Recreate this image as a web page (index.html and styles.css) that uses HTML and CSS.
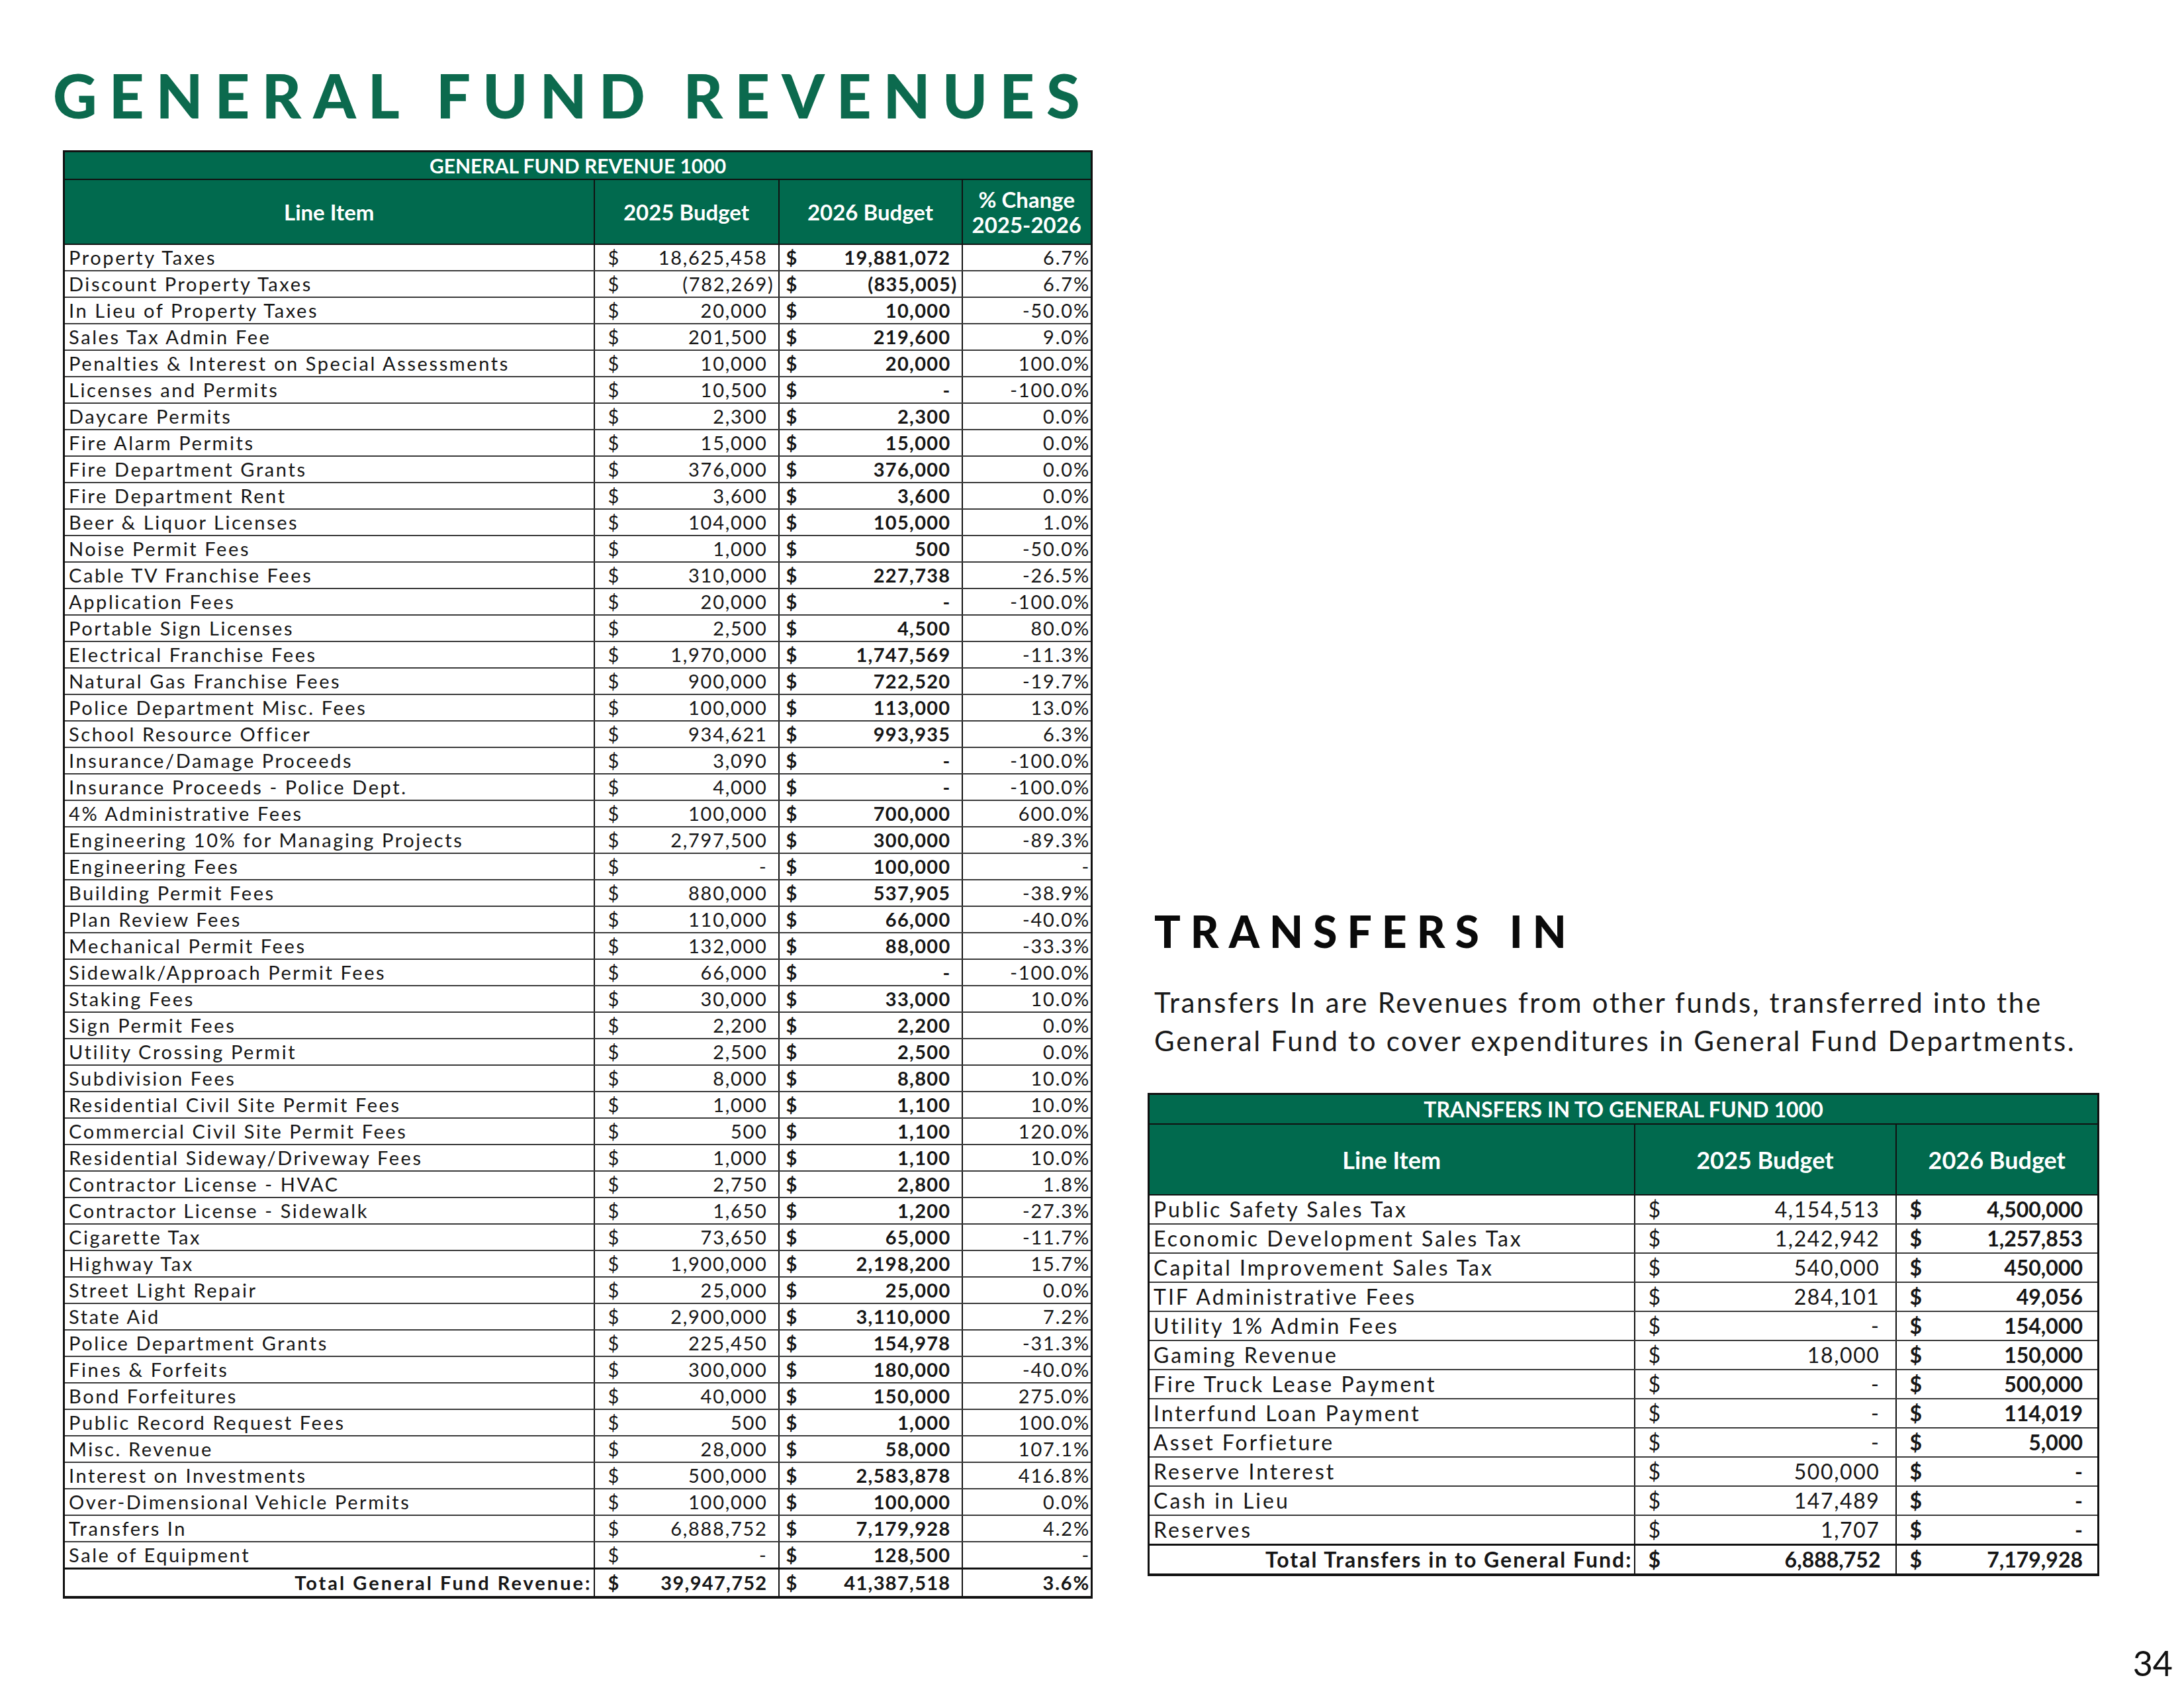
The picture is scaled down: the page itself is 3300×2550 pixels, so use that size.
FILE: index.html
```html
<!DOCTYPE html>
<html>
<head>
<meta charset="utf-8">
<link rel="stylesheet" href="styles.css">
</head>
<body>
<div class="page">
  <div class="content">
    <section class="left">
      <h1 class="title">GENERAL FUND REVENUES</h1>
      <table class="rev">
        <colgroup><col class="c1"><col class="c2"><col class="c3"><col class="c4"></colgroup>
        <thead>
          <tr class="cap"><th colspan="4">GENERAL FUND REVENUE 1000</th></tr>
          <tr class="head"><th>Line Item</th><th>2025 Budget</th><th>2026 Budget</th><th>% Change<br>2025-2026</th></tr>
        </thead>
        <tbody>
          <tr><td class="name">Property Taxes</td><td class="amt"><span class="cur">$</span>18,625,458</td><td class="amt b"><span class="cur">$</span>19,881,072</td><td class="pct">6.7%</td></tr>
          <tr><td class="name">Discount Property Taxes</td><td class="amt"><span class="cur">$</span><span class="neg">(782,269)</span></td><td class="amt b"><span class="cur">$</span><span class="neg">(835,005)</span></td><td class="pct">6.7%</td></tr>
          <tr><td class="name">In Lieu of Property Taxes</td><td class="amt"><span class="cur">$</span>20,000</td><td class="amt b"><span class="cur">$</span>10,000</td><td class="pct">-50.0%</td></tr>
          <tr><td class="name">Sales Tax Admin Fee</td><td class="amt"><span class="cur">$</span>201,500</td><td class="amt b"><span class="cur">$</span>219,600</td><td class="pct">9.0%</td></tr>
          <tr><td class="name">Penalties &amp; Interest on Special Assessments</td><td class="amt"><span class="cur">$</span>10,000</td><td class="amt b"><span class="cur">$</span>20,000</td><td class="pct">100.0%</td></tr>
          <tr><td class="name">Licenses and Permits</td><td class="amt"><span class="cur">$</span>10,500</td><td class="amt b"><span class="cur">$</span>-</td><td class="pct">-100.0%</td></tr>
          <tr><td class="name">Daycare Permits</td><td class="amt"><span class="cur">$</span>2,300</td><td class="amt b"><span class="cur">$</span>2,300</td><td class="pct">0.0%</td></tr>
          <tr><td class="name">Fire Alarm Permits</td><td class="amt"><span class="cur">$</span>15,000</td><td class="amt b"><span class="cur">$</span>15,000</td><td class="pct">0.0%</td></tr>
          <tr><td class="name">Fire Department Grants</td><td class="amt"><span class="cur">$</span>376,000</td><td class="amt b"><span class="cur">$</span>376,000</td><td class="pct">0.0%</td></tr>
          <tr><td class="name">Fire Department Rent</td><td class="amt"><span class="cur">$</span>3,600</td><td class="amt b"><span class="cur">$</span>3,600</td><td class="pct">0.0%</td></tr>
          <tr><td class="name">Beer &amp; Liquor Licenses</td><td class="amt"><span class="cur">$</span>104,000</td><td class="amt b"><span class="cur">$</span>105,000</td><td class="pct">1.0%</td></tr>
          <tr><td class="name">Noise Permit Fees</td><td class="amt"><span class="cur">$</span>1,000</td><td class="amt b"><span class="cur">$</span>500</td><td class="pct">-50.0%</td></tr>
          <tr><td class="name">Cable TV Franchise Fees</td><td class="amt"><span class="cur">$</span>310,000</td><td class="amt b"><span class="cur">$</span>227,738</td><td class="pct">-26.5%</td></tr>
          <tr><td class="name">Application Fees</td><td class="amt"><span class="cur">$</span>20,000</td><td class="amt b"><span class="cur">$</span>-</td><td class="pct">-100.0%</td></tr>
          <tr><td class="name">Portable Sign Licenses</td><td class="amt"><span class="cur">$</span>2,500</td><td class="amt b"><span class="cur">$</span>4,500</td><td class="pct">80.0%</td></tr>
          <tr><td class="name">Electrical Franchise Fees</td><td class="amt"><span class="cur">$</span>1,970,000</td><td class="amt b"><span class="cur">$</span>1,747,569</td><td class="pct">-11.3%</td></tr>
          <tr><td class="name">Natural Gas Franchise Fees</td><td class="amt"><span class="cur">$</span>900,000</td><td class="amt b"><span class="cur">$</span>722,520</td><td class="pct">-19.7%</td></tr>
          <tr><td class="name">Police Department Misc. Fees</td><td class="amt"><span class="cur">$</span>100,000</td><td class="amt b"><span class="cur">$</span>113,000</td><td class="pct">13.0%</td></tr>
          <tr><td class="name">School Resource Officer</td><td class="amt"><span class="cur">$</span>934,621</td><td class="amt b"><span class="cur">$</span>993,935</td><td class="pct">6.3%</td></tr>
          <tr><td class="name">Insurance/Damage Proceeds</td><td class="amt"><span class="cur">$</span>3,090</td><td class="amt b"><span class="cur">$</span>-</td><td class="pct">-100.0%</td></tr>
          <tr><td class="name">Insurance Proceeds - Police Dept.</td><td class="amt"><span class="cur">$</span>4,000</td><td class="amt b"><span class="cur">$</span>-</td><td class="pct">-100.0%</td></tr>
          <tr><td class="name">4% Administrative Fees</td><td class="amt"><span class="cur">$</span>100,000</td><td class="amt b"><span class="cur">$</span>700,000</td><td class="pct">600.0%</td></tr>
          <tr><td class="name">Engineering 10% for Managing Projects</td><td class="amt"><span class="cur">$</span>2,797,500</td><td class="amt b"><span class="cur">$</span>300,000</td><td class="pct">-89.3%</td></tr>
          <tr><td class="name">Engineering Fees</td><td class="amt"><span class="cur">$</span>-</td><td class="amt b"><span class="cur">$</span>100,000</td><td class="pct">-</td></tr>
          <tr><td class="name">Building Permit Fees</td><td class="amt"><span class="cur">$</span>880,000</td><td class="amt b"><span class="cur">$</span>537,905</td><td class="pct">-38.9%</td></tr>
          <tr><td class="name">Plan Review Fees</td><td class="amt"><span class="cur">$</span>110,000</td><td class="amt b"><span class="cur">$</span>66,000</td><td class="pct">-40.0%</td></tr>
          <tr><td class="name">Mechanical Permit Fees</td><td class="amt"><span class="cur">$</span>132,000</td><td class="amt b"><span class="cur">$</span>88,000</td><td class="pct">-33.3%</td></tr>
          <tr><td class="name">Sidewalk/Approach Permit Fees</td><td class="amt"><span class="cur">$</span>66,000</td><td class="amt b"><span class="cur">$</span>-</td><td class="pct">-100.0%</td></tr>
          <tr><td class="name">Staking Fees</td><td class="amt"><span class="cur">$</span>30,000</td><td class="amt b"><span class="cur">$</span>33,000</td><td class="pct">10.0%</td></tr>
          <tr><td class="name">Sign Permit Fees</td><td class="amt"><span class="cur">$</span>2,200</td><td class="amt b"><span class="cur">$</span>2,200</td><td class="pct">0.0%</td></tr>
          <tr><td class="name">Utility Crossing Permit</td><td class="amt"><span class="cur">$</span>2,500</td><td class="amt b"><span class="cur">$</span>2,500</td><td class="pct">0.0%</td></tr>
          <tr><td class="name">Subdivision Fees</td><td class="amt"><span class="cur">$</span>8,000</td><td class="amt b"><span class="cur">$</span>8,800</td><td class="pct">10.0%</td></tr>
          <tr><td class="name">Residential Civil Site Permit Fees</td><td class="amt"><span class="cur">$</span>1,000</td><td class="amt b"><span class="cur">$</span>1,100</td><td class="pct">10.0%</td></tr>
          <tr><td class="name">Commercial Civil Site Permit Fees</td><td class="amt"><span class="cur">$</span>500</td><td class="amt b"><span class="cur">$</span>1,100</td><td class="pct">120.0%</td></tr>
          <tr><td class="name">Residential Sideway/Driveway Fees</td><td class="amt"><span class="cur">$</span>1,000</td><td class="amt b"><span class="cur">$</span>1,100</td><td class="pct">10.0%</td></tr>
          <tr><td class="name">Contractor License - HVAC</td><td class="amt"><span class="cur">$</span>2,750</td><td class="amt b"><span class="cur">$</span>2,800</td><td class="pct">1.8%</td></tr>
          <tr><td class="name">Contractor License - Sidewalk</td><td class="amt"><span class="cur">$</span>1,650</td><td class="amt b"><span class="cur">$</span>1,200</td><td class="pct">-27.3%</td></tr>
          <tr><td class="name">Cigarette Tax</td><td class="amt"><span class="cur">$</span>73,650</td><td class="amt b"><span class="cur">$</span>65,000</td><td class="pct">-11.7%</td></tr>
          <tr><td class="name">Highway Tax</td><td class="amt"><span class="cur">$</span>1,900,000</td><td class="amt b"><span class="cur">$</span>2,198,200</td><td class="pct">15.7%</td></tr>
          <tr><td class="name">Street Light Repair</td><td class="amt"><span class="cur">$</span>25,000</td><td class="amt b"><span class="cur">$</span>25,000</td><td class="pct">0.0%</td></tr>
          <tr><td class="name">State Aid</td><td class="amt"><span class="cur">$</span>2,900,000</td><td class="amt b"><span class="cur">$</span>3,110,000</td><td class="pct">7.2%</td></tr>
          <tr><td class="name">Police Department Grants</td><td class="amt"><span class="cur">$</span>225,450</td><td class="amt b"><span class="cur">$</span>154,978</td><td class="pct">-31.3%</td></tr>
          <tr><td class="name">Fines &amp; Forfeits</td><td class="amt"><span class="cur">$</span>300,000</td><td class="amt b"><span class="cur">$</span>180,000</td><td class="pct">-40.0%</td></tr>
          <tr><td class="name">Bond Forfeitures</td><td class="amt"><span class="cur">$</span>40,000</td><td class="amt b"><span class="cur">$</span>150,000</td><td class="pct">275.0%</td></tr>
          <tr><td class="name">Public Record Request Fees</td><td class="amt"><span class="cur">$</span>500</td><td class="amt b"><span class="cur">$</span>1,000</td><td class="pct">100.0%</td></tr>
          <tr><td class="name">Misc. Revenue</td><td class="amt"><span class="cur">$</span>28,000</td><td class="amt b"><span class="cur">$</span>58,000</td><td class="pct">107.1%</td></tr>
          <tr><td class="name">Interest on Investments</td><td class="amt"><span class="cur">$</span>500,000</td><td class="amt b"><span class="cur">$</span>2,583,878</td><td class="pct">416.8%</td></tr>
          <tr><td class="name">Over-Dimensional Vehicle Permits</td><td class="amt"><span class="cur">$</span>100,000</td><td class="amt b"><span class="cur">$</span>100,000</td><td class="pct">0.0%</td></tr>
          <tr><td class="name">Transfers In</td><td class="amt"><span class="cur">$</span>6,888,752</td><td class="amt b"><span class="cur">$</span>7,179,928</td><td class="pct">4.2%</td></tr>
          <tr><td class="name">Sale of Equipment</td><td class="amt"><span class="cur">$</span>-</td><td class="amt b"><span class="cur">$</span>128,500</td><td class="pct">-</td></tr>
          <tr class="total"><td class="name">Total General Fund Revenue:</td><td class="amt"><span class="cur">$</span>39,947,752</td><td class="amt"><span class="cur">$</span>41,387,518</td><td class="pct">3.6%</td></tr>
        </tbody>
      </table>
    </section>
    <section class="right">
      <h2 class="sub">TRANSFERS IN</h2>
      <p class="intro">Transfers In are Revenues from other funds, transferred into the<br>General Fund to cover expenditures in General Fund Departments.</p>
      <table class="xfer">
        <colgroup><col class="d1"><col class="d2"><col class="d3"></colgroup>
        <thead>
          <tr class="cap"><th colspan="3">TRANSFERS IN TO GENERAL FUND 1000</th></tr>
          <tr class="head"><th>Line Item</th><th>2025 Budget</th><th>2026 Budget</th></tr>
        </thead>
        <tbody>
          <tr><td class="name">Public Safety Sales Tax</td><td class="amt"><span class="cur">$</span>4,154,513</td><td class="amt b"><span class="cur">$</span>4,500,000</td></tr>
          <tr><td class="name">Economic Development Sales Tax</td><td class="amt"><span class="cur">$</span>1,242,942</td><td class="amt b"><span class="cur">$</span>1,257,853</td></tr>
          <tr><td class="name">Capital Improvement Sales Tax</td><td class="amt"><span class="cur">$</span>540,000</td><td class="amt b"><span class="cur">$</span>450,000</td></tr>
          <tr><td class="name">TIF Administrative Fees</td><td class="amt"><span class="cur">$</span>284,101</td><td class="amt b"><span class="cur">$</span>49,056</td></tr>
          <tr><td class="name">Utility 1% Admin Fees</td><td class="amt"><span class="cur">$</span>-</td><td class="amt b"><span class="cur">$</span>154,000</td></tr>
          <tr><td class="name">Gaming Revenue</td><td class="amt"><span class="cur">$</span>18,000</td><td class="amt b"><span class="cur">$</span>150,000</td></tr>
          <tr><td class="name">Fire Truck Lease Payment</td><td class="amt"><span class="cur">$</span>-</td><td class="amt b"><span class="cur">$</span>500,000</td></tr>
          <tr><td class="name">Interfund Loan Payment</td><td class="amt"><span class="cur">$</span>-</td><td class="amt b"><span class="cur">$</span>114,019</td></tr>
          <tr><td class="name">Asset Forfieture</td><td class="amt"><span class="cur">$</span>-</td><td class="amt b"><span class="cur">$</span>5,000</td></tr>
          <tr><td class="name">Reserve Interest</td><td class="amt"><span class="cur">$</span>500,000</td><td class="amt b"><span class="cur">$</span>-</td></tr>
          <tr><td class="name">Cash in Lieu</td><td class="amt"><span class="cur">$</span>147,489</td><td class="amt b"><span class="cur">$</span>-</td></tr>
          <tr><td class="name">Reserves</td><td class="amt"><span class="cur">$</span>1,707</td><td class="amt b"><span class="cur">$</span>-</td></tr>
          <tr class="total"><td class="name">Total Transfers in to General Fund:</td><td class="amt"><span class="cur">$</span>6,888,752</td><td class="amt"><span class="cur">$</span>7,179,928</td></tr>
        </tbody>
      </table>
    </section>
  </div>
  <footer class="pageno">34</footer>
</div>
</body>
</html>
```
FILE: styles.css
```css
html, body {
  margin: 0;
  padding: 0;
  background: #ffffff;
}
body {
  font-family: Lato, "Open Sans", sans-serif;
  color: #161616;
}
.page {
  width: 3300px;
  height: 2550px;
  display: flex;
  flex-direction: column;
  box-sizing: border-box;
}
.content {
  display: grid;
  grid-template-columns: 1568px 1435px;
  column-gap: 86px;
  padding-left: 80px;
  align-items: start;
}
.title {
  margin: 98px 0 0 0;
  font-size: 92px;
  line-height: 92px;
  font-weight: 900;
  letter-spacing: 18px;
  color: #0c6a4e;
  white-space: nowrap;
}
table {
  border-collapse: collapse;
  table-layout: fixed;
}
.rev {
  margin: 37px 0 0 15px;
  width: 1553px;
  border: 3px solid #111;
  font-size: 29px;
}
.c1 { width: 801px; }
.c2 { width: 279px; }
.c3 { width: 277px; }
.c4 { width: 196px; }
.xfer {
  margin: 50px 0 0 0;
  width: 1435px;
  border: 3px solid #111;
  font-size: 32px;
}
.d1 { width: 734px; }
.d2 { width: 395px; }
.d3 { width: 306px; }
th {
  background: #016a4e;
  color: #ffffff;
  font-weight: 700;
  padding: 0;
  border: 2px solid #111;
}
.cap th {
  font-size: 30px;
  height: 40px;
  line-height: 40px;
}
.rev .head th {
  height: 96px;
  line-height: 38px;
  font-size: 33px;
}
.xfer .cap th {
  height: 43px;
  font-size: 32px;
}
.xfer .head th {
  height: 105px;
  font-size: 36px;
}
td {
  padding: 0;
  border-left: 2px solid #111;
  border-right: 2px solid #111;
  border-bottom: 2px solid #3a3a3a;
  white-space: nowrap;
}
.rev td {
  height: 38px;
  line-height: 38px;
}
.xfer td {
  height: 42px;
  line-height: 42px;
}
.name {
  padding-left: 6px;
  text-align: left;
}
.rev .name {
  letter-spacing: 2.6px;
}
.xfer .name {
  letter-spacing: 3px;
}
.amt {
  text-align: right;
  padding-right: 16px;
  padding-left: 20px;
}
.rev .amt {
  letter-spacing: 1.7px;
}
.rev .amt.b, .rev .total .amt {
  letter-spacing: 1.3px;
}
.xfer .amt {
  letter-spacing: 1.6px;
  padding-right: 23px;
}
.xfer .amt.b, .xfer .total .amt {
  letter-spacing: 0;
  padding-right: 22px;
}
.cur {
  float: left;
}
.rev .amt.b .cur, .rev .total .amt:nth-child(3) .cur {
  margin-left: -10px;
}
.b {
  font-weight: 700;
}
.neg {
  margin-right: -10px;
}
.pct {
  text-align: right;
  padding-right: 1px;
  letter-spacing: 1.8px;
}
.total td {
  font-weight: 700;
  border-top: 3px solid #111;
  border-bottom: 4px solid #111;
}
.total .name {
  text-align: right;
  padding-right: 2px;
}
.rev .total .name {
  letter-spacing: 3px;
}
.xfer .total .name {
  letter-spacing: 2px;
}
.rev .total td {
  height: 40px;
}
.sub {
  margin: 1374px 0 0 10px;
  font-size: 66px;
  line-height: 66px;
  font-weight: 900;
  letter-spacing: 15px;
  color: #0a0a0a;
}
.intro {
  margin: 45px 0 0 10px;
  font-size: 42px;
  line-height: 58px;
  letter-spacing: 2.7px;
  color: #1a1a1a;
  white-space: nowrap;
}
.pageno {
  margin-top: auto;
  text-align: right;
  padding: 0 17px 12px 0;
  font-size: 52px;
  line-height: 52px;
  color: #111;
}
```
